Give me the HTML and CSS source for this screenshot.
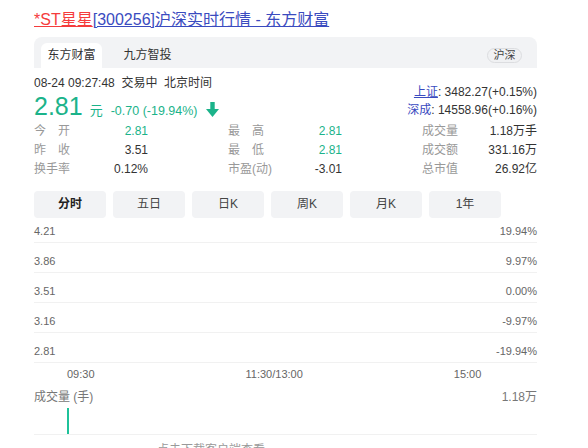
FILE: index.html
```html
<!DOCTYPE html>
<html lang="zh-CN">
<head>
<meta charset="utf-8">
<title>*ST星星[300256]沪深实时行情 - 东方财富</title>
<link rel="stylesheet" href="styles.css">
</head>
<body>
<div class="page">
  <h1 class="title"><span class="t-red">*ST星星</span><span class="t-blue">[300256]沪深实时行情 - 东方财富</span></h1>

  <div class="tabbar">
    <div class="tab active">东方财富</div>
    <div class="tab">九方智投</div>
    <div class="spacer"></div>
    <span class="pill">沪深</span>
  </div>

  <div class="quote">
    <div class="quote-left">
      <div class="info">08-24 09:27:48&nbsp;&nbsp;交易中&nbsp;&nbsp;北京时间</div>
      <div class="price-row">
        <span class="price">2.81</span>
        <span class="unit">元</span>
        <span class="change">-0.70 (-19.94%)</span>
        <svg class="arrow" width="13" height="15" viewBox="0 0 13 15"><rect x="4.3" y="0" width="4.4" height="8" fill="#1bb38a"/><polygon points="0,7 13,7 6.5,15" fill="#1bb38a"/></svg>
      </div>
    </div>
    <div class="index">
      <div><span class="idx-name ul">上证</span>: 3482.27(+0.15%)</div>
      <div><span class="idx-name">深成</span>: 14558.96(+0.16%)</div>
    </div>
  </div>

  <div class="stats">
    <div class="cell"><span class="lbl spread">今开</span><span class="val green">2.81</span></div>
    <div class="cell"><span class="lbl spread">最高</span><span class="val green">2.81</span></div>
    <div class="cell"><span class="lbl">成交量</span><span class="val">1.18万手</span></div>
    <div class="cell"><span class="lbl spread">昨收</span><span class="val">3.51</span></div>
    <div class="cell"><span class="lbl spread">最低</span><span class="val green">2.81</span></div>
    <div class="cell"><span class="lbl">成交额</span><span class="val">331.16万</span></div>
    <div class="cell"><span class="lbl">换手率</span><span class="val">0.12%</span></div>
    <div class="cell"><span class="lbl">市盈(动)</span><span class="val">-3.01</span></div>
    <div class="cell"><span class="lbl">总市值</span><span class="val">26.92亿</span></div>
  </div>

  <div class="periods">
    <div class="pbtn on">分时</div>
    <div class="pbtn">五日</div>
    <div class="pbtn">日K</div>
    <div class="pbtn">周K</div>
    <div class="pbtn">月K</div>
    <div class="pbtn">1年</div>
  </div>

  <div class="chart">
    <div class="grow first"><span>4.21</span><span>19.94%</span></div>
    <div class="grow"><span>3.86</span><span>9.97%</span></div>
    <div class="grow"><span>3.51</span><span>0.00%</span></div>
    <div class="grow"><span>3.16</span><span>-9.97%</span></div>
    <div class="grow"><span>2.81</span><span>-19.94%</span></div>
  </div>

  <div class="axis">
    <span class="t1">09:30</span>
    <span class="t2">11:30/13:00</span>
    <span class="t3">15:00</span>
  </div>

  <div class="vol-head"><span>成交量 (手)</span><span>1.18万</span></div>
  <div class="vol"><div class="bar"></div></div>

  <div class="foot">点击下载客户端查看</div>
</div>
</body>
</html>
```
FILE: styles.css
```css
* { box-sizing: border-box; }
html, body { margin: 0; padding: 0; background: #fff; }
body {
  font-family: "Liberation Sans", "Noto Sans CJK SC", sans-serif;
  color: #333;
  font-size: 12px;
  overflow: hidden;
  height: 448px;
}
.page { width: 503px; margin-left: 34px; }

.title {
  margin: 0;
  padding-top: 10px;
  font-size: 16px;
  font-weight: normal;
  line-height: 20px;
  height: 30px;
  white-space: nowrap;
}
.t-red { color: #f53c3c; text-decoration: underline; }
.t-blue { color: #3a4bbf; text-decoration: underline; }

.tabbar {
  margin-top: 7px;
  height: 31px;
  background: #f2f3f5;
  border-radius: 8px 8px 0 0;
  padding: 6px 15px 0 7px;
  display: flex;
  align-items: stretch;
}
.tab {
  width: 61px;
  line-height: 25px;
  text-align: center;
  font-size: 12px;
  color: #333;
}
.tab.active { background: #fff; border-radius: 6px 6px 0 0; }
.tab + .tab { margin-left: 15px; }
.spacer { flex: 1; }
.pill {
  align-self: center;
  margin-top: 0;
  width: 35px;
  height: 15px;
  line-height: 13px;
  font-size: 11px;
  text-align: center;
  border: 1px solid #dcdde0;
  border-radius: 8px;
  background: #f0f1f3;
  color: #444;
}

.quote { display: flex; justify-content: space-between; }
.info { margin-top: 7px; line-height: 16px; font-size: 12px; color: #333; }
.price-row {
  margin-top: 2px;
  height: 26px;
  display: flex;
  align-items: baseline;
  color: #1bb38a;
}
.price { font-size: 25px; line-height: 26px; }
.unit { font-size: 13px; margin-left: 7px; }
.change { font-size: 12.5px; margin-left: 8px; }
.arrow { margin-left: 8px; align-self: flex-end; margin-bottom: 2px; }

.index { padding-top: 15px; text-align: right; font-size: 12px; line-height: 18px; color: #333; }
.idx-name { color: #3a4bbf; }
.idx-name.ul { text-decoration: underline; }

.stats {
  margin-top: 3px;
  display: grid;
  grid-template-columns: 114px 114px 115px;
  column-gap: 80px;
  font-size: 12px;
  line-height: 19px;
}
.cell { display: flex; justify-content: space-between; }
.lbl { color: #999; }
.lbl.spread { width: 36px; text-align: justify; text-align-last: justify; }
.val { color: #333; }
.val.green { color: #1bb38a; }

.periods { margin-top: 12px; display: flex; gap: 7px; }
.pbtn {
  width: 72px;
  height: 27px;
  line-height: 27px;
  text-align: center;
  background: #f2f3f5;
  border-radius: 4px;
  font-size: 12px;
  color: #444;
}
.pbtn.on { font-weight: bold; color: #222; }

.chart { font-size: 11px; color: #666; }
.grow {
  display: flex;
  justify-content: space-between;
  padding: 11px 0 4px;
  line-height: 14px;
  border-bottom: 1px solid #f1f1f1;
}
.grow.first { padding-top: 6px; }

.axis {
  display: flex;
  padding-top: 4px;
  line-height: 14px;
  font-size: 11px;
  color: #666;
}
.t1 { margin-left: 33px; }
.t2 { margin-left: 151px; }
.t3 { margin-left: 151px; }

.vol-head {
  margin-top: 9px;
  display: flex;
  justify-content: space-between;
  line-height: 14px;
  font-size: 12px;
  color: #777;
}
.vol {
  height: 31px;
  border-bottom: 1px solid #f1f1f1;
  display: flex;
  align-items: flex-end;
  padding-left: 33px;
}
.bar { width: 2px; height: 26px; background: #1fc29a; }

.foot {
  margin-top: 7px;
  padding-left: 123px;
  line-height: 16px;
  font-size: 12px;
  color: #999;
}
```
